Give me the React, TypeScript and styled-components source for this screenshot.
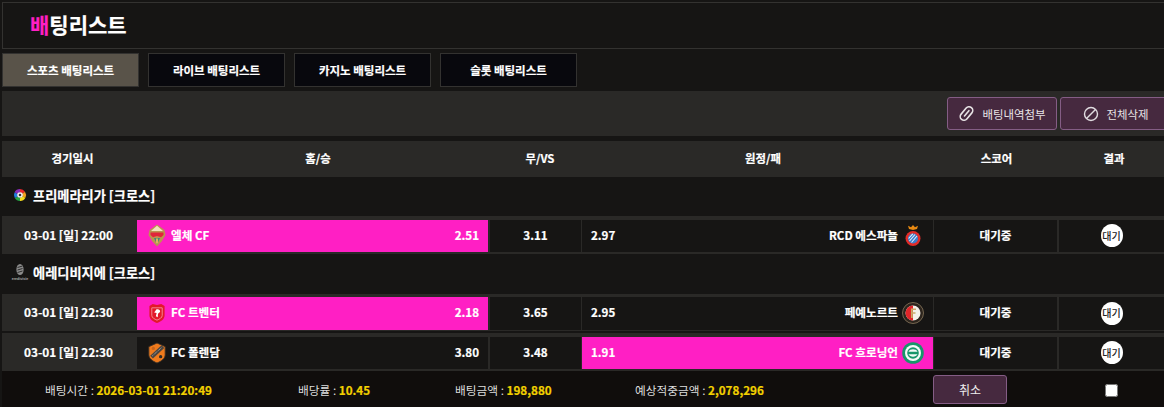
import React from "react";
import styled, { createGlobalStyle, css } from "styled-components";

const Global = createGlobalStyle`
  html, body { margin: 0; padding: 0; background: #161514; }
  body { font-family: "Noto Sans CJK KR", "Liberation Sans", sans-serif; color: #fff; overflow: hidden; }
  * { box-sizing: border-box; }
`;

const heavy = css`
  font-weight: 700;
  -webkit-text-stroke: 0.2px currentColor;
`;

const Page = styled.div`
  width: 1164px; height: 407px; padding: 2px 0 0 2px; overflow: hidden;
  display: flex; flex-direction: column;
`;
const TitleBar = styled.div`
  flex: none; height: 47px; border: 1px solid #333230; border-right: 0; background: #161514;
  padding: 0 0 2px 27px; display: flex; align-items: center;
`;
const Title = styled.h1`
  margin: 0; font-size: 21px; line-height: 1; color: #fff; ${heavy}
  span { color: #ff1fc4; }
`;
const Tabs = styled.div`
  flex: none; display: flex; gap: 9px; margin-top: 4px; height: 34px;
`;
const Tab = styled.div<{ $active?: boolean }>`
  width: 137px; height: 34px; border: 1px solid #333230;
  background: ${p => (p.$active ? "#595349" : "#08080d")};
  display: flex; align-items: center; justify-content: center;
  font-size: 11.5px; color: #fff; ${heavy}
`;
const Toolbar = styled.div`
  flex: none; margin-top: 4px; height: 45px; background: #2a2927; padding-right: 0;
  display: flex; justify-content: flex-end; align-items: center; gap: 3px;
`;
const Button = styled.button<{ $width: number; $overflow?: number }>`
  flex: none; width: ${p => p.$width}px; height: 33px; border: 1px solid #845d85; border-radius: 3px;
  margin-right: ${p => -(p.$overflow ?? 0)}px;
  background: #46293f; color: #e8e4e6; display: flex; align-items: center; justify-content: center; gap: 8px;
  font-family: inherit; font-size: 11.4px; padding: 0 1px 0 0;
  svg { flex: none; }
`;
const Head = styled.div`
  flex: none; margin-top: 5px; height: 36px; background: #2a2927; display: grid;
  grid-template-columns: 141px 350px 94px 352px 115px 120px; align-items: center;
  overflow: hidden; padding-bottom: 2px;
`;
const HeadCell = styled.div`
  text-align: center; font-size: 11.4px; ${heavy}
`;
const League = styled.div<{ $height: number }>`
  flex: none; height: ${p => p.$height}px; display: flex; align-items: center; gap: 2px; padding: 0 0 3px 7px;
  font-size: 13.2px; color: #fff; ${heavy}
`;
const LeagueIcon = styled.span`
  width: 22px; display: flex; justify-content: center;
`;
const Row = styled.div<{ $top: number; $bottom: number; $cell: number; $gap?: number }>`
  flex: none; display: grid; grid-template-columns: 135px 351px 93px 352px 124px 107px;
  background: #2a2927; height: ${p => p.$top + p.$bottom + p.$cell}px;
  margin-bottom: ${p => p.$gap ?? 0}px;
  > :not(:first-child) {
    margin-top: ${p => p.$top}px;
    margin-bottom: ${p => p.$bottom}px;
  }
`;
const TimeCell = styled.div`
  display: flex; align-items: center; justify-content: center; font-size: 11.8px; padding: 0 2px 2px 0; ${heavy}
`;
const Team = styled.div<{ $picked?: boolean; $away?: boolean }>`
  background: ${p => (p.$picked ? "#ff1fc4" : "#161514")};
  display: flex; align-items: center; justify-content: space-between;
  padding: ${p => (p.$away ? "0 9px 3px 9px" : "0 9px 3px 10px")};
  font-size: 11.6px; color: #fff; ${heavy}
`;
const TeamName = styled.span`
  display: flex; align-items: center; gap: 4px;
`;
const Badge = styled.span<{ $width: number }>`
  flex: none; width: ${p => p.$width}px; height: 16px; display: flex; justify-content: center; align-items: center;
  margin-top: 2px;
`;
const Cell = styled.div<{ $left: number }>`
  margin-left: ${p => p.$left}px; background: #161514; padding-bottom: 3px;
  display: flex; align-items: center; justify-content: center; font-size: 11.6px; ${heavy}
`;
const AwayWrap = styled.div`
  margin-left: 1px; display: grid;
`;
const Waiting = styled.span`
  width: 22px; height: 23px; border-radius: 50%; background: #fff; color: #222; margin-top: 2px; padding-bottom: 1px;
  display: flex; align-items: center; justify-content: center; font-size: 10px; font-weight: 500;
  -webkit-text-stroke: 0;
`;
const Footer = styled.div`
  flex: none; height: 36px; background: #100d0c;
  display: grid; grid-template-columns: 931px 172px 1fr; align-items: center;
  font-size: 11.7px; color: #ddd;
`;
const Stats = styled.div`
  display: flex; padding-left: 43px; align-items: center;
`;
const Stat = styled.span<{ $width: number }>`
  width: ${p => p.$width}px; white-space: nowrap;
  b { color: #f2d100; ${heavy} }
`;
const CancelWrap = styled.div`display: flex;`;
const Cancel = styled.button`
  width: 74px; height: 29px; border: 1px solid #845d85; border-radius: 3px; background: #46293f;
  color: #eee; font-family: inherit; font-size: 12px; padding: 0;
`;
const Check = styled.input`
  margin: 2px 0 0; width: 13px; height: 13px; appearance: auto;
`;

const LaLiga = () => (
  <svg width="14" height="15" viewBox="0 0 14 15">
    <path d="M7 1a6 6 0 0 1 5 2.8L9 6 7 4z" fill="#e8282b" />
    <path d="M12 3.8A6 6 0 0 1 12.4 9.7L9.4 8.4 9 6z" fill="#f2a01e" />
    <path d="M12.4 9.7A6 6 0 0 1 7 13V10l2.4-1.6z" fill="#f5dc1c" />
    <path d="M7 13a6 6 0 0 1-5.2-3L4.6 8.4 7 10z" fill="#28a745" />
    <path d="M1.8 10A6 6 0 0 1 1.6 4.2L4.6 6 4.6 8.4z" fill="#1f7de0" />
    <path d="M1.6 4.2A6 6 0 0 1 7 1V4L4.6 6z" fill="#8a2bb8" />
    <circle cx="7" cy="7" r="2.8" fill="#f2f2f2" />
    <circle cx="7" cy="7" r="1.3" fill="#333" />
  </svg>
);
const Eredivisie = () => (
  <svg width="20" height="21" viewBox="0 0 20 21">
    <ellipse cx="10" cy="7.5" rx="3.6" ry="5.5" fill="#8b8b8b" />
    <path d="M7.5 5.5 12.5 4M7.5 8 12.5 6.5M7.5 10.5 12.5 9" stroke="#222" strokeWidth="0.9" />
    <text x="10" y="18" textAnchor="middle" fontSize="3.6" fill="#aaa" fontFamily="Liberation Sans">eredivisie</text>
  </svg>
);
const Elche = () => (
  <svg width="20" height="23" viewBox="0 0 20 23">
    <path d="M10 .5 17.500 6 18.500 11 15 17 10 22.500 5 17 1.500 11 2.500 6z" fill="#bd9350" />
    <path d="M10 1.800 16 7H4z" fill="#f3e3bd" />
    <path d="M3.500 8.500h13V11l-2.500 2.200-4-1.200-4 1.200L3.500 11z" fill="#e2243a" />
    <path d="M7 14h6l-3 6.500z" fill="#3f8c78" />
    <path d="M9 14.500h2v5H9z" fill="#dcb35f" />
  </svg>
);
const Twente = () => (
  <svg width="18" height="21" viewBox="0 0 19 22">
    <path d="M1.500 3 5 1l4.500 1L14 1l3.500 2v10c0 4-4 6.500-8 8-4-1.500-8-4-8-8z" fill="#e2182a" />
    <path d="M4 5h11v8c0 2.500-3 4-5.500 5C7 17 4 15.500 4 13z" fill="none" stroke="#f58b96" strokeWidth="1" />
    <path d="M9 6.500c2.500-.5 4 .7 3.800 2.500-.2 1.500-1.800 1.500-2.300 2.500l-.2 3.500-2-1 .8-3.500-2.600-.6 1-1.200z" fill="#fff" />
  </svg>
);
const Volendam = () => (
  <svg width="20" height="22" viewBox="0 0 22 24">
    <path d="M2 5 11 1l9 4v9c0 4-4 7-9 9-5-2-9-5-9-9z" fill="#ef7a1c" stroke="#3b3026" strokeWidth="1" />
    <path d="M3.500 15 16 3.500 19 6.500 6.500 18z" fill="#4a4540" />
    <path d="M6 15 16 6" stroke="#ccc" strokeWidth="1" strokeDasharray="1 1" />
    <circle cx="15" cy="16" r="1.800" fill="#2d2a26" />
    <circle cx="7" cy="7" r="1.800" fill="#c9651a" />
  </svg>
);
const Espanyol = () => (
  <svg width="16" height="23" viewBox="0 0 16 23">
    <path d="M4 5 3 1.800 6 3.200 8 1 10 3.200 13 1.800 12 5 8 6z" fill="#e88912" />
    <circle cx="8" cy="14.500" r="7.500" fill="#e22c28" />
    <circle cx="8" cy="14.500" r="5" fill="#3a7fd0" />
    <path d="M4.500 17 10 10.500M6.500 18.500 12 12M3.600 14.500 7.800 9.800" stroke="#e9eef5" strokeWidth="1.100" />
  </svg>
);
const Feyenoord = () => (
  <svg width="22" height="22" viewBox="0 0 22 22">
    <circle cx="11" cy="11" r="10.500" fill="#2c241d" stroke="#8c7a60" strokeWidth="0.800" />
    <circle cx="11" cy="11" r="7.500" fill="#f4f0ea" />
    <path d="M11 3.500a7.500 7.500 0 0 0 0 15z" fill="#e0262a" />
    <path d="M9 6.500h5v1.500h-3.200v2.300h2.700v1.500h-2.700v4.200H9z" fill="#c9a969" />
  </svg>
);
const Groningen = () => (
  <svg width="22" height="22" viewBox="0 0 22 22">
    <circle cx="11" cy="11" r="10.800" fill="#17966a" />
    <circle cx="11" cy="11" r="8" fill="#f4fbf8" />
    <circle cx="11" cy="11" r="5.800" fill="#17966a" />
    <path d="M6.500 9.700C8 6.500 14 6.500 15.500 9.700z" fill="#f4fbf8" />
    <path d="M6.500 12.300h9C14 15.500 8 15.500 6.500 12.300z" fill="#f4fbf8" />
  </svg>
);
const Clip = () => (
  <svg width="17" height="17" viewBox="0 0 16 16" fill="none" stroke="#e8e4e6" strokeWidth="1.500" strokeLinecap="round">
    <g transform="rotate(40 8 8)">
      <rect x="4.500" y="0.800" width="7" height="14.400" rx="3.500" />
      <path d="M8 4.500v6.500" />
    </g>
  </svg>
);
const Ban = () => (
  <svg width="16" height="16" viewBox="0 0 16 16" fill="none" stroke="#e0dce0" strokeWidth="1.400">
    <circle cx="8" cy="8" r="6.500" />
    <path d="M3.500 12.500 12.500 3.500" />
  </svg>
);

type Game = {
  time: string; top: number; bottom: number; cell: number; gap?: number;
  home: string; homeOdd: string; homeIcon: React.ReactNode;
  vs: string; awayOdd: string; away: string; awayIcon: React.ReactNode;
  pick: "home" | "away";
};
const GameRow = ({ g }: { g: Game }) => (
  <Row $top={g.top} $bottom={g.bottom} $cell={g.cell} $gap={g.gap}>
    <TimeCell>{g.time}</TimeCell>
    <Team $picked={g.pick === "home"}>
      <TeamName><Badge $width={20}>{g.homeIcon}</Badge>{g.home}</TeamName>
      <span>{g.homeOdd}</span>
    </Team>
    <Cell $left={2}>{g.vs}</Cell>
    <AwayWrap>
      <Team $picked={g.pick === "away"} $away>
        <span>{g.awayOdd}</span>
        <TeamName>{g.away}<Badge $width={22}>{g.awayIcon}</Badge></TeamName>
      </Team>
    </AwayWrap>
    <Cell $left={1}>대기중</Cell>
    <Cell $left={2}><Waiting>대기</Waiting></Cell>
  </Row>
);

export default function App() {
  return (
    <Page>
      <Global />
      <TitleBar><Title><span>배</span>팅리스트</Title></TitleBar>
      <Tabs>
        <Tab $active>스포츠 배팅리스트</Tab>
        <Tab>라이브 배팅리스트</Tab>
        <Tab>카지노 배팅리스트</Tab>
        <Tab>슬롯 배팅리스트</Tab>
      </Tabs>
      <Toolbar>
        <Button $width={110}><Clip />배팅내역첨부</Button>
        <Button $width={112} $overflow={8}><Ban />전체삭제</Button>
      </Toolbar>
      <Head>
        <HeadCell>경기일시</HeadCell>
        <HeadCell>홈/승</HeadCell>
        <HeadCell>무/VS</HeadCell>
        <HeadCell>원정/패</HeadCell>
        <HeadCell>스코어</HeadCell>
        <HeadCell>결과</HeadCell>
      </Head>
      <League $height={39}><LeagueIcon><LaLiga /></LeagueIcon>프리메라리가 [크로스]</League>
      <GameRow g={{ time: "03-01 [일] 22:00", top: 4, bottom: 2, cell: 32, home: "엘체 CF", homeOdd: "2.51", homeIcon: <Elche />, vs: "3.11", awayOdd: "2.97", away: "RCD 에스파뇰", awayIcon: <Espanyol />, pick: "home" }} />
      <League $height={40}><LeagueIcon><Eredivisie /></LeagueIcon>에레디비지에 [크로스]</League>
      <GameRow g={{ time: "03-01 [일] 22:30", top: 3, bottom: 1, cell: 33, gap: 2, home: "FC 트벤터", homeOdd: "2.18", homeIcon: <Twente />, vs: "3.65", awayOdd: "2.95", away: "페예노르트", awayIcon: <Feyenoord />, pick: "home" }} />
      <GameRow g={{ time: "03-01 [일] 22:30", top: 4, bottom: 2, cell: 32, home: "FC 폴렌담", homeOdd: "3.80", homeIcon: <Volendam />, vs: "3.48", awayOdd: "1.91", away: "FC 흐로닝언", awayIcon: <Groningen />, pick: "away" }} />
      <Footer>
        <Stats>
          <Stat $width={253}>배팅시간 : <b>2026-03-01 21:20:49</b></Stat>
          <Stat $width={157}>배당률 : <b>10.45</b></Stat>
          <Stat $width={180}>배팅금액 : <b>198,880</b></Stat>
          <Stat $width={250}>예상적중금액 : <b>2,078,296</b></Stat>
        </Stats>
        <CancelWrap><Cancel>취소</Cancel></CancelWrap>
        <Check type="checkbox" />
      </Footer>
    </Page>
  );
}
